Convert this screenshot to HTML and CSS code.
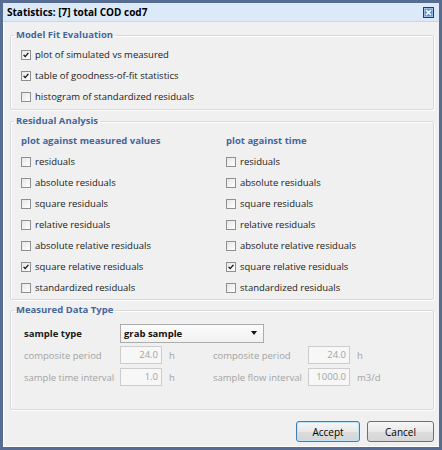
FILE: index.html
```html
<!DOCTYPE html>
<html lang="en">
<head>
    <meta charset="UTF-8">
    <meta name="viewport" content="width=device-width, initial-scale=1.0">
    <title>Statistics</title>
    <link rel="stylesheet" href="styles.css">
</head>
<body>
    <div class="window">
        <div class="titlebar">
            <span class="title">Statistics: [7] total COD cod7</span>
            <span class="close">
                <svg width="11" height="11" viewBox="0 0 11 11">
                    <rect x="0.5" y="0.5" width="10" height="10" fill="#cfe0f6" stroke="#1d3b73"/>
                    <rect x="1.5" y="1.5" width="8" height="8" fill="#5d93d8"/>
                    <path d="M3 3 L8 8 M8 3 L3 8" stroke="#ffffff" stroke-width="1.6"/>
                </svg>
            </span>
        </div>

        <div class="content">
            <fieldset class="group fit">
                <legend>Model Fit Evaluation</legend>
                <div class="check"><span class="box on"><svg viewBox="0 0 10 10"><path d="M2 4.8 L4 7 L8 2.4"/></svg></span>plot of simulated vs measured</div>
                <div class="check"><span class="box on"><svg viewBox="0 0 10 10"><path d="M2 4.8 L4 7 L8 2.4"/></svg></span>table of goodness-of-fit statistics</div>
                <div class="check"><span class="box"></span>histogram of standardized residuals</div>
            </fieldset>

            <fieldset class="group residual">
                <legend>Residual Analysis</legend>
                <div class="columns">
                    <div class="col">
                        <div class="col-head">plot against measured values</div>
                        <div class="check"><span class="box"></span>residuals</div>
                        <div class="check"><span class="box"></span>absolute residuals</div>
                        <div class="check"><span class="box"></span>square residuals</div>
                        <div class="check"><span class="box"></span>relative residuals</div>
                        <div class="check"><span class="box"></span>absolute relative residuals</div>
                        <div class="check"><span class="box on"><svg viewBox="0 0 10 10"><path d="M2 4.8 L4 7 L8 2.4"/></svg></span>square relative residuals</div>
                        <div class="check"><span class="box"></span>standardized residuals</div>
                    </div>
                    <div class="col">
                        <div class="col-head">plot against time</div>
                        <div class="check"><span class="box"></span>residuals</div>
                        <div class="check"><span class="box"></span>absolute residuals</div>
                        <div class="check"><span class="box"></span>square residuals</div>
                        <div class="check"><span class="box"></span>relative residuals</div>
                        <div class="check"><span class="box"></span>absolute relative residuals</div>
                        <div class="check"><span class="box on"><svg viewBox="0 0 10 10"><path d="M2 4.8 L4 7 L8 2.4"/></svg></span>square relative residuals</div>
                        <div class="check"><span class="box"></span>standardized residuals</div>
                    </div>
                </div>
            </fieldset>

            <fieldset class="group data">
                <legend>Measured Data Type</legend>
                <div class="data-grid">
                    <span class="label strong">sample type</span>
                    <div class="select">grab sample<span class="arrow"></span></div>

                    <span class="label">composite period</span>
                    <span class="field">24.0</span>
                    <span class="unit">h</span>
                    <span class="label">composite period</span>
                    <span class="field">24.0</span>
                    <span class="unit">h</span>

                    <span class="label">sample time interval</span>
                    <span class="field">1.0</span>
                    <span class="unit">h</span>
                    <span class="label">sample flow interval</span>
                    <span class="field">1000.0</span>
                    <span class="unit">m3/d</span>
                </div>
            </fieldset>

            <div class="buttons">
                <button class="btn default">Accept</button>
                <button class="btn">Cancel</button>
            </div>
        </div>
    </div>
</body>
</html>
```

FILE: styles.css
```css
* {
    box-sizing: border-box;
}
body {
    margin: 0;
    font-family: "Open Sans", Arial, sans-serif;
    font-size: 9.5px;
    color: #1a1a1a;
    background: #ffffff;
}
.window {
    width: 442px;
    height: 450px;
    border: 3px solid #566c93;
    background: #f0f0f0;
    display: flex;
    flex-direction: column;
}
.titlebar {
    height: 19px;
    background: #dce9f9;
    display: flex;
    align-items: center;
    justify-content: space-between;
    padding: 0 4px 0 4px;
    border-bottom: 1px solid #c9d6e6;
}
.title {
    font-weight: bold;
    font-size: 10px;
    color: #000000;
}
.close {
    display: flex;
    margin-right: 1px;
}
.content {
    flex: 1;
    padding: 7px 5px 0 6px;
    border-left: 1px solid #ffffff;
    border-bottom: 1px solid #ffffff;
    display: flex;
    flex-direction: column;
}
.group {
    margin: 0;
    border: 1px solid #d9d9d9;
    box-shadow: inset 1px 1px 0 #ffffff, 1px 1px 0 #ffffff;
    border-radius: 2px;
    padding: 0 10px;
}
.group legend {
    font-weight: bold;
    color: #45659b;
    line-height: 12px;
    padding: 0 2px;
    margin-left: -7px;
}
.fit {
    padding-top: 3px;
    padding-bottom: 2px;
}
.residual {
    margin-top: 5px;
    padding-top: 3px;
    padding-bottom: 1px;
}
.data {
    margin-top: 4px;
    padding: 6px 10px 21px 13px;
}
.data legend {
    margin-left: -10px;
}
.check {
    height: 21px;
    display: flex;
    align-items: center;
    gap: 4px;
}
.box {
    width: 10px;
    height: 10px;
    border: 1px solid #8e8f8f;
    background: linear-gradient(135deg, #e6e6e6, #ffffff);
    display: inline-flex;
    flex-shrink: 0;
}
.box svg {
    width: 8px;
    height: 8px;
}
.box svg path {
    fill: none;
    stroke: #111111;
    stroke-width: 1.7;
}
.columns {
    display: grid;
    grid-template-columns: 205px 1fr;
}
.col-head {
    height: 21px;
    line-height: 21px;
    font-weight: bold;
    color: #45659b;
}
.data-grid {
    display: grid;
    grid-template-columns: 96px 42px 51px 95px 42px auto;
    grid-auto-rows: 22px;
    align-items: center;
}
.label {
    color: #a3a3a3;
    white-space: nowrap;
}
.label.strong {
    color: #1a1a1a;
    font-weight: bold;
}
.select {
    grid-column: 2 / -1;
    justify-self: start;
    width: 144px;
    height: 19px;
    border: 1px solid #acacac;
    background: linear-gradient(#fbfbfb, #f1f1f1);
    padding: 0 6px 0 3px;
    display: flex;
    align-items: center;
    justify-content: space-between;
    font-weight: bold;
    color: #111111;
}
.arrow {
    width: 0;
    height: 0;
    border-left: 3.5px solid transparent;
    border-right: 3.5px solid transparent;
    border-top: 4px solid #111111;
}
.field {
    height: 18px;
    border: 1px solid #cccccc;
    background: #f7f7f7;
    color: #a3a3a3;
    text-align: right;
    padding: 0 3px;
    line-height: 16px;
}
.unit {
    color: #a3a3a3;
    padding-left: 7px;
    white-space: nowrap;
}
.buttons {
    display: flex;
    justify-content: flex-end;
    gap: 7px;
    margin-top: 11px;
    padding-right: 0;
}
.btn {
    font-family: "Open Sans", Arial, sans-serif;
    font-size: 10px;
    height: 21px;
    border: 1px solid #707070;
    border-radius: 3px;
    background: linear-gradient(#f6f6f6, #e9e9e9 50%, #dcdcdc 51%, #d6d6d6);
    color: #000000;
    padding: 0;
    width: 67px;
}
.btn.default {
    width: 64px;
    border-color: #3c7fb1;
    box-shadow: inset 0 0 0 1px #bfe3f7;
}
```
